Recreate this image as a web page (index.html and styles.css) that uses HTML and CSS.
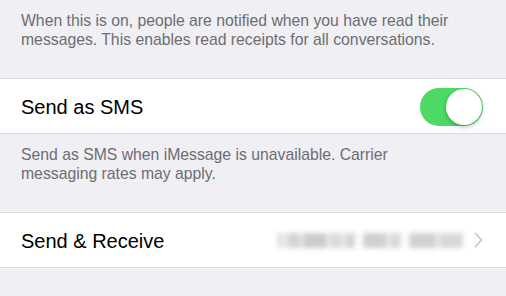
FILE: index.html
```html
<!DOCTYPE html>
<html>
<head>
<meta charset="utf-8">
<link rel="stylesheet" href="styles.css">
</head>
<body>
<div class="screen">
  <p class="note">When this is on, people are notified when you have read their messages. This enables read receipts for all conversations.</p>
  <div class="group">
    <div class="row">
      <span class="label">Send as SMS</span>
      <span class="toggle"><span class="knob"></span></span>
    </div>
  </div>
  <p class="note note-narrow">Send as SMS when iMessage is unavailable. Carrier messaging rates may apply.</p>
  <div class="group">
    <div class="row">
      <span class="label">Send &amp; Receive</span>
      <span class="detail">
        <span class="blur">
          <span class="px p1"></span><span class="px p2"></span><span class="px p3"></span><span class="px p4"></span><span class="px p5"></span><span class="px p6"></span><span class="px p7"></span><span class="px p8"></span><span class="px p9"></span>
        </span>
        <svg class="chev" width="9" height="16" viewBox="0 0 9 16"><path d="M1.5 1.5 L7.5 8 L1.5 14.5" fill="none" stroke="#c7c7cc" stroke-width="1.8" stroke-linecap="round" stroke-linejoin="round"/></svg>
      </span>
    </div>
  </div>
</div>
</body>
</html>
```

FILE: styles.css
```css
html, body {
  margin: 0;
  padding: 0;
  background: #efeff4;
}
.screen {
  width: 506px;
  height: 296px;
  overflow: hidden;
  font-family: "Liberation Sans", Arial, sans-serif;
}
.note {
  margin: 0;
  padding: 11px 24px 29px 21px;
  font-size: 15.75px;
  line-height: 19px;
  color: #6d6d72;
}
.note-narrow {
  padding-right: 60px;
}
.group {
  background: #fff;
  border-top: 1px solid #dcdce0;
  border-bottom: 1px solid #dcdce0;
}
.row {
  height: 54px;
  display: flex;
  align-items: center;
  justify-content: space-between;
  padding: 0 23px 0 21px;
}
.label {
  font-size: 20px;
  color: #000;
  margin-top: 2px;
}
.toggle {
  width: 63px;
  height: 38px;
  border-radius: 19px;
  background: #4cd964;
  display: flex;
  align-items: center;
  justify-content: flex-end;
  padding-right: 1px;
  box-sizing: border-box;
  margin-top: 2px;
}
.knob {
  width: 36px;
  height: 36px;
  border-radius: 50%;
  background: #fff;
  box-shadow: 0 2px 4px rgba(0,0,0,0.25), 0 0 0 0.5px rgba(0,0,0,0.08);
}
.detail {
  display: flex;
  align-items: center;
  gap: 9px;
}
.blur {
  display: flex;
  align-items: center;
  height: 24px;
  filter: blur(2.5px);
  opacity: 0.8;
}
.px {
  display: block;
  height: 15px;
  background: #c9c9cc;
  margin-right: 2px;
}
.p1 { width: 8px; background: #dcdcdf; }
.p2 { width: 14px; }
.p3 { width: 24px; background: #bebec2; }
.p4 { width: 14px; background: #d2d2d5; }
.p5 { width: 10px; margin-right: 8px; }
.p6 { width: 24px; background: #c4c4c8; }
.p7 { width: 12px; background: #d0d0d3; margin-right: 8px; }
.p8 { width: 28px; background: #c6c6c9; }
.p9 { width: 24px; background: #cfcfd2; }
.chev {
  display: block;
}
```
